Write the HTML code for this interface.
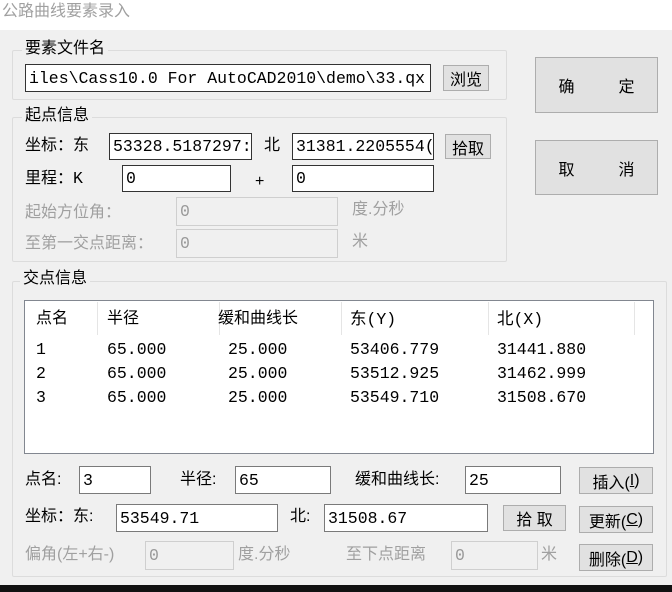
<!DOCTYPE html>
<html><head><meta charset="utf-8"><style>
*{box-sizing:border-box;margin:0;padding:0}
body{width:672px;height:592px;background:#f0f0f0;position:relative;overflow:hidden;font-family:"Liberation Sans","Noto Sans CJK SC",sans-serif;font-size:16px;color:#000}
.a{position:absolute;white-space:nowrap;line-height:1}
.g{position:absolute;border:1px solid #dcdcdc;border-radius:2px}
.gl{position:absolute;background:#f0f0f0;padding:0 3px;font-size:16px;line-height:1}
.in{position:absolute;background:#fff;border:1px solid #7a7a7a;font-family:"Liberation Mono","Noto Sans CJK SC",monospace;font-size:16.5px;padding-left:3px;overflow:hidden;white-space:nowrap;display:flex;align-items:center}
.dis{background:#f0f0f0;border-color:#cfcfcf;color:#9a9a9a}
.b{position:absolute;background:#e1e1e1;border:1px solid #adadad;display:flex;align-items:center;justify-content:center;font-size:16px;white-space:nowrap}
.gr{color:#a0a0a0}
.m{font-family:"Liberation Mono","Noto Sans CJK SC",monospace;font-size:16.5px}
</style></head><body>
<div style="position:absolute;left:0;top:0;width:672px;height:30px;background:#fff"></div>
<div class="a gr" style="left:2px;top:4px;font-size:16px">公路曲线要素录入</div>

<div class="g" style="left:12px;top:50px;width:495px;height:50px"></div>
<div class="gl" style="left:22px;top:41px">要素文件名</div>
<div class="in" style="left:25px;top:64px;width:406px;height:28px;border-color:#333">iles\Cass10.0 For AutoCAD2010\demo\33.qx</div>
<div class="b" style="left:443px;top:65px;width:46px;height:26px">浏览</div>

<div class="g" style="left:12px;top:117px;width:495px;height:145px"></div>
<div class="gl" style="left:22px;top:108px">起点信息</div>
<div class="a" style="left:25px;top:138px">坐标：东</div>
<div class="in" style="left:109px;top:133px;width:143px;height:27px;border-color:#333">53328.5187297:</div>
<div class="a" style="left:264px;top:138px">北</div>
<div class="in" style="left:292px;top:133px;width:142px;height:27px;border-color:#333">31381.2205554(</div>
<div class="b" style="left:445px;top:134px;width:46px;height:25px">拾取</div>
<div class="a" style="left:25px;top:171px">里程：</div>
<div class="a m" style="left:73px;top:171px">K</div>
<div class="in" style="left:122px;top:165px;width:109px;height:27px;border-color:#333">0</div>
<div class="a" style="left:255px;top:174px">+</div>
<div class="in" style="left:292px;top:165px;width:142px;height:27px;border-color:#333">0</div>
<div class="a gr" style="left:25px;top:205px">起始方位角：</div>
<div class="in dis" style="left:176px;top:197px;width:162px;height:29px">0</div>
<div class="a gr" style="left:352px;top:202px">度.分秒</div>
<div class="a gr" style="left:25px;top:236px">至第一交点距离：</div>
<div class="in dis" style="left:176px;top:229px;width:162px;height:29px">0</div>
<div class="a gr" style="left:352px;top:234px">米</div>

<div class="b" style="left:535px;top:57px;width:123px;height:56px"><span>确</span><span style="margin-left:44px">定</span></div>
<div class="b" style="left:535px;top:140px;width:123px;height:55px"><span>取</span><span style="margin-left:44px">消</span></div>

<div class="g" style="left:12px;top:281px;width:655px;height:296px"></div>
<div class="gl" style="left:20px;top:271px">交点信息</div>
<div style="position:absolute;left:24px;top:300px;width:630px;height:154px;background:#fff;border:1px solid #828790"></div>
<div style="position:absolute;left:97px;top:302px;width:1px;height:33px;background:#e5e5e5"></div>
<div style="position:absolute;left:219px;top:302px;width:1px;height:33px;background:#e5e5e5"></div>
<div style="position:absolute;left:341px;top:302px;width:1px;height:33px;background:#e5e5e5"></div>
<div style="position:absolute;left:488px;top:302px;width:1px;height:33px;background:#e5e5e5"></div>
<div style="position:absolute;left:634px;top:302px;width:1px;height:33px;background:#e5e5e5"></div>
<div class="a" style="left:36px;top:311px">点名</div>
<div class="a" style="left:107px;top:311px">半径</div>
<div class="a" style="left:218px;top:311px">缓和曲线长</div>
<div class="a m" style="left:350px;top:312px">东(Y)</div>
<div class="a m" style="left:497px;top:312px">北(X)</div>
<div class="a m" style="left:36px;top:342px">1</div><div class="a m" style="left:107px;top:342px">65.000</div><div class="a m" style="left:228px;top:342px">25.000</div><div class="a m" style="left:350px;top:342px">53406.779</div><div class="a m" style="left:497px;top:342px">31441.880</div>
<div class="a m" style="left:36px;top:366px">2</div><div class="a m" style="left:107px;top:366px">65.000</div><div class="a m" style="left:228px;top:366px">25.000</div><div class="a m" style="left:350px;top:366px">53512.925</div><div class="a m" style="left:497px;top:366px">31462.999</div>
<div class="a m" style="left:36px;top:390px">3</div><div class="a m" style="left:107px;top:390px">65.000</div><div class="a m" style="left:228px;top:390px">25.000</div><div class="a m" style="left:350px;top:390px">53549.710</div><div class="a m" style="left:497px;top:390px">31508.670</div>

<div class="a" style="left:25px;top:472px">点名:</div>
<div class="in" style="left:79px;top:466px;width:72px;height:28px">3</div>
<div class="a" style="left:180px;top:472px">半径:</div>
<div class="in" style="left:235px;top:466px;width:96px;height:28px">65</div>
<div class="a" style="left:355px;top:472px">缓和曲线长:</div>
<div class="in" style="left:465px;top:466px;width:96px;height:28px">25</div>
<div class="b" style="left:579px;top:467px;width:74px;height:27px">插入(<u>I</u>)</div>

<div class="a" style="left:25px;top:509px">坐标：东:</div>
<div class="in" style="left:116px;top:504px;width:162px;height:28px">53549.71</div>
<div class="a" style="left:290px;top:509px">北:</div>
<div class="in" style="left:324px;top:504px;width:164px;height:28px">31508.67</div>
<div class="b" style="left:503px;top:505px;width:63px;height:26px">拾 取</div>
<div class="b" style="left:579px;top:506px;width:74px;height:27px">更新(<u>C</u>)</div>

<div class="a gr" style="left:25px;top:547px">偏角(左+右-)</div>
<div class="in dis" style="left:145px;top:541px;width:89px;height:29px">0</div>
<div class="a gr" style="left:238px;top:547px">度.分秒</div>
<div class="a gr" style="left:346px;top:547px">至下点距离</div>
<div class="in dis" style="left:451px;top:541px;width:87px;height:29px">0</div>
<div class="a gr" style="left:541px;top:547px">米</div>
<div class="b" style="left:579px;top:544px;width:74px;height:27px">删除(<u>D</u>)</div>

<div style="position:absolute;left:0;top:585px;width:672px;height:7px;background:#111"></div>
</body></html>
